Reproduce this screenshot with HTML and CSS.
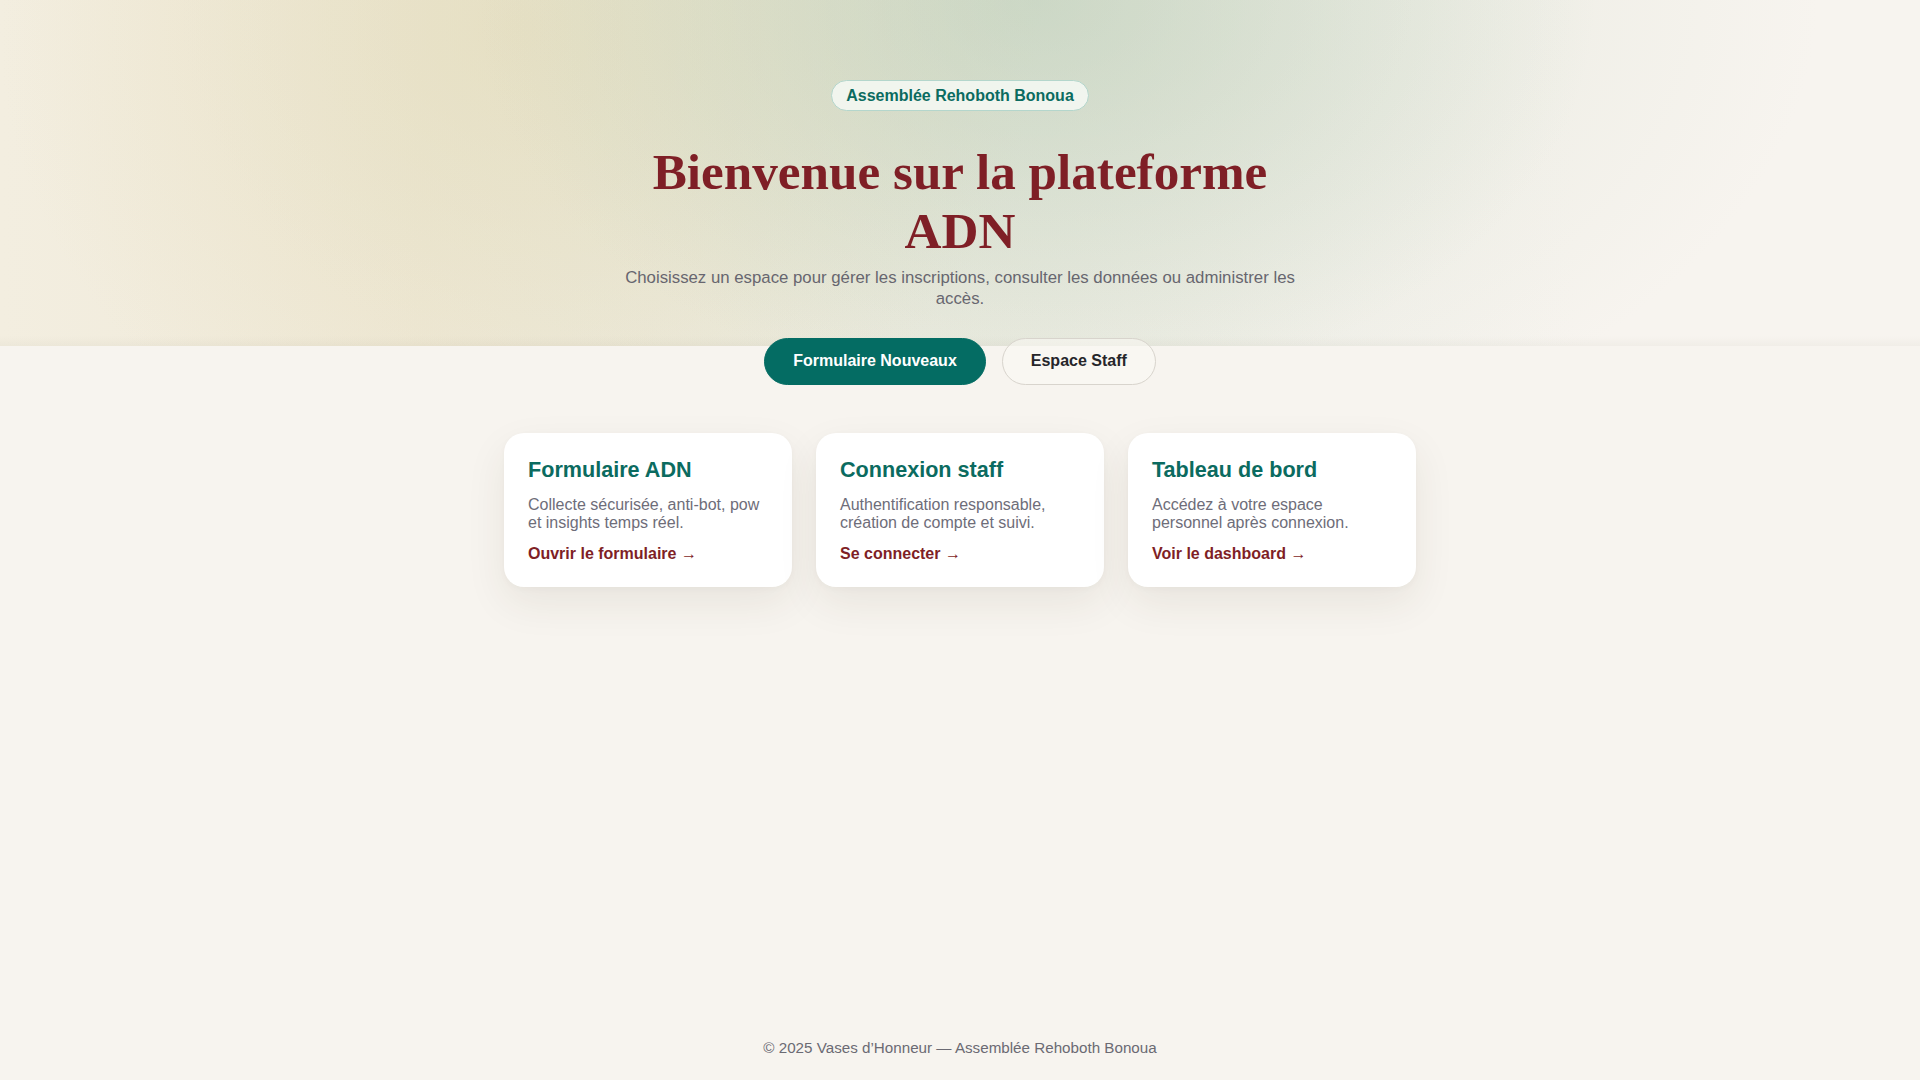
FILE: index.html
```html
<!DOCTYPE html>
<html lang="fr">
<head>
<meta charset="utf-8">
<title>Plateforme ADN — Assemblée Rehoboth Bonoua</title>
<link rel="stylesheet" href="styles.css">
</head>
<body>
<main class="page">
  <section class="hero">
    <span class="badge">Assemblée Rehoboth Bonoua</span>
    <h1 class="hero-title">Bienvenue sur la plateforme ADN</h1>
    <p class="hero-sub">Choisissez un espace pour gérer les inscriptions, consulter les données ou administrer les accès.</p>
    <div class="actions">
      <a class="btn btn-primary" href="#">Formulaire Nouveaux</a>
      <a class="btn btn-ghost" href="#">Espace Staff</a>
    </div>
  </section>
  <section class="cards">
    <article class="card">
      <h3 class="card-title">Formulaire ADN</h3>
      <p class="card-text">Collecte sécurisée, anti-bot, pow et insights temps réel.</p>
      <a class="card-link" href="#">Ouvrir le formulaire →</a>
    </article>
    <article class="card">
      <h3 class="card-title">Connexion staff</h3>
      <p class="card-text">Authentification responsable, création de compte et suivi.</p>
      <a class="card-link" href="#">Se connecter →</a>
    </article>
    <article class="card">
      <h3 class="card-title">Tableau de bord</h3>
      <p class="card-text">Accédez à votre espace personnel après connexion.</p>
      <a class="card-link" href="#">Voir le dashboard →</a>
    </article>
  </section>
</main>
<footer class="footer">© 2025 Vases d’Honneur — Assemblée Rehoboth Bonoua</footer>
</body>
</html>
```
FILE: styles.css
```css
* { box-sizing: border-box; }

html, body { height: 100%; }

body {
  margin: 0;
  min-height: 100vh;
  display: flex;
  flex-direction: column;
  font-family: "Liberation Sans", Arial, sans-serif;
  color: #2a2a2e;
  background-color: #f7f4ef;
  background-image:
    linear-gradient(to bottom, rgba(0,0,0,0) 0, rgba(0,0,0,0) 336px, rgba(120,110,90,0.05) 346px),
    radial-gradient(ellipse 560px 400px at 54% 0%, rgba(170,195,170,0.38), rgba(170,195,170,0) 100%),
    radial-gradient(ellipse 520px 480px at 27% 8%, rgba(228,218,180,0.55), rgba(228,218,180,0) 100%),
    radial-gradient(ellipse 820px 500px at 52% 0%, rgba(218,224,208,0.7), rgba(218,224,208,0) 100%),
    linear-gradient(to right, #f3eee0 0%, #efe9d8 22%, rgba(236,236,226,0.75) 55%, rgba(240,240,234,0.5) 70%, rgba(247,244,239,0) 82%);
  background-size: 100% 346px;
  background-repeat: no-repeat;
}

.page {
  flex: 1;
  display: flex;
  flex-direction: column;
  align-items: center;
}

.hero {
  width: 100%;
  max-width: 700px;
  padding-top: 80px;
  display: flex;
  flex-direction: column;
  align-items: center;
  text-align: center;
}

.badge {
  display: block;
  padding: 5.5px 14px;
  border: 1px solid #b4d6cc;
  border-radius: 999px;
  background: rgba(246, 249, 245, 0.85);
  color: #0b6b60;
  font-weight: 700;
  font-size: 16px;
  line-height: 18.4px;
}

.hero-title {
  margin: 32px 0 6px;
  font-family: "Liberation Serif", "Times New Roman", serif;
  font-weight: 700;
  font-size: 51.2px;
  line-height: 1.15;
  color: #7f1f26;
}

.hero-sub {
  margin: 0;
  font-size: 16.8px;
  line-height: 21px;
  color: #67666f;
}

.actions {
  margin-top: 29px;
  display: flex;
  gap: 16px;
  justify-content: center;
}

.btn {
  display: block;
  padding: 13px 28px;
  border: 1px solid transparent;
  border-radius: 999px;
  font-weight: 700;
  font-size: 16px;
  line-height: 18.4px;
  text-decoration: none;
}

.btn-primary {
  background: #046c63;
  border-color: #046c63;
  color: #ffffff;
}

.btn-ghost {
  background: rgba(250, 248, 244, 0.6);
  border-color: #d8d4cd;
  color: #26262a;
}

.cards {
  width: 100%;
  max-width: 960px;
  padding: 0 24px;
  margin-top: 48px;
  display: grid;
  grid-template-columns: repeat(3, 1fr);
  gap: 24px;
}

.card {
  background: #ffffff;
  border-radius: 20px;
  padding: 24px 24px 23px;
  box-shadow: 0 16px 40px rgba(70, 50, 30, 0.08), 0 2px 6px rgba(70, 50, 30, 0.03);
}

.card-title {
  margin: 0 0 13.5px;
  font-size: 21.6px;
  line-height: 26px;
  font-weight: 700;
  color: #0b6b60;
}

.card-text {
  margin: 0 0 11px;
  font-size: 16px;
  line-height: 18.4px;
  color: #6e6d79;
}

.card-link {
  display: block;
  font-size: 16px;
  line-height: 20px;
  font-weight: 700;
  color: #7f1f26;
  text-decoration: none;
}

.footer {
  padding: 25px 24px 23px;
  text-align: center;
  font-size: 15.2px;
  line-height: 18px;
  color: #6b6a73;
}
```
